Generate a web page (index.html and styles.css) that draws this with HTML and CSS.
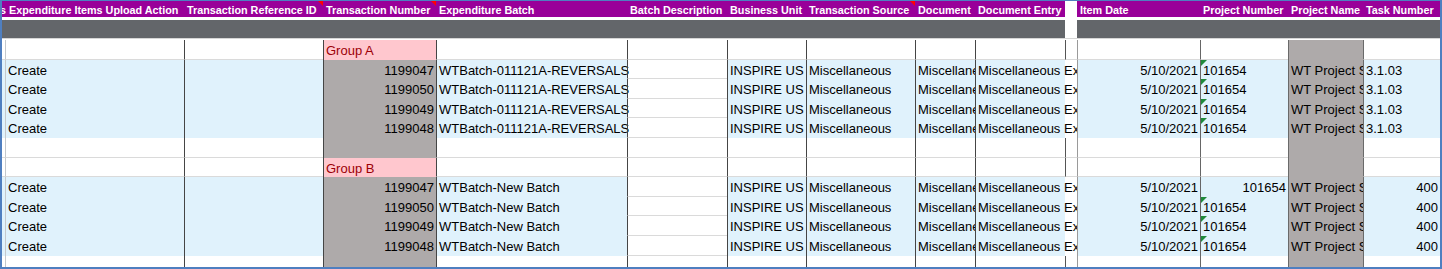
FILE: index.html
```html
<!DOCTYPE html>
<html>
<head>
<meta charset="utf-8">
<link rel="stylesheet" href="styles.css">
</head>
<body>
<div class="frame">
  <div class="row hdr">
    <div class="k0">Actions</div>
    <div class="k1">Expenditure Items Upload Action</div>
    <div class="k2 note">Transaction Reference ID</div>
    <div class="k3 note">Transaction Number</div>
    <div class="k4">Expenditure Batch</div>
    <div class="k5">Batch Description</div>
    <div class="k6">Business Unit</div>
    <div class="k7 note">Transaction Source</div>
    <div class="k8">Document</div>
    <div class="k9">Document Entry</div>
    <div class="k10"></div>
    <div class="k11">Item Date</div>
    <div class="k12">Project Number</div>
    <div class="k13">Project Name</div>
    <div class="k14">Task Number</div>
  </div>
  <div class="gap"></div>
  <div class="row band">
    <div class="k0"></div><div class="k1"></div><div class="k2"></div><div class="k3"></div><div class="k4"></div><div class="k5"></div><div class="k6"></div><div class="k7"></div><div class="k8"></div><div class="k9"></div><div class="k10"></div><div class="k11"></div><div class="k12"></div><div class="k13"></div><div class="k14"></div>
  </div>
  <div class="sep"></div>

  <div class="row body grp">
    <div class="k0"></div><div class="k1"></div><div class="k2"></div><div class="k3">Group A</div><div class="k4"></div><div class="k5"></div><div class="k6"></div><div class="k7"></div><div class="k8"></div><div class="k9"></div><div class="k10"></div><div class="k11"></div><div class="k12"></div><div class="k13"></div><div class="k14"></div>
  </div>
  <div class="row body data">
    <div class="k0"></div><div class="k1">Create</div><div class="k2"></div><div class="k3 num">1199047</div><div class="k4 ov">WTBatch-011121A-REVERSALS</div><div class="k5"></div><div class="k6">INSPIRE US Entity</div><div class="k7">Miscellaneous</div><div class="k8">Miscellaneous</div><div class="k9 ov">Miscellaneous Expenditure</div><div class="k10"></div><div class="k11 num">5/10/2021</div><div class="k12 tri">101654</div><div class="k13">WT Project Summary</div><div class="k14">3.1.03</div>
  </div>
  <div class="row body data">
    <div class="k0"></div><div class="k1">Create</div><div class="k2"></div><div class="k3 num">1199050</div><div class="k4 ov">WTBatch-011121A-REVERSALS</div><div class="k5"></div><div class="k6">INSPIRE US Entity</div><div class="k7">Miscellaneous</div><div class="k8">Miscellaneous</div><div class="k9 ov">Miscellaneous Expenditure</div><div class="k10"></div><div class="k11 num">5/10/2021</div><div class="k12 tri">101654</div><div class="k13">WT Project Summary</div><div class="k14">3.1.03</div>
  </div>
  <div class="row body data">
    <div class="k0"></div><div class="k1">Create</div><div class="k2"></div><div class="k3 num">1199049</div><div class="k4 ov">WTBatch-011121A-REVERSALS</div><div class="k5"></div><div class="k6">INSPIRE US Entity</div><div class="k7">Miscellaneous</div><div class="k8">Miscellaneous</div><div class="k9 ov">Miscellaneous Expenditure</div><div class="k10"></div><div class="k11 num">5/10/2021</div><div class="k12 tri">101654</div><div class="k13">WT Project Summary</div><div class="k14">3.1.03</div>
  </div>
  <div class="row body data">
    <div class="k0"></div><div class="k1">Create</div><div class="k2"></div><div class="k3 num">1199048</div><div class="k4 ov">WTBatch-011121A-REVERSALS</div><div class="k5"></div><div class="k6">INSPIRE US Entity</div><div class="k7">Miscellaneous</div><div class="k8">Miscellaneous</div><div class="k9 ov">Miscellaneous Expenditure</div><div class="k10"></div><div class="k11 num">5/10/2021</div><div class="k12 tri">101654</div><div class="k13">WT Project Summary</div><div class="k14">3.1.03</div>
  </div>
  <div class="row body blank">
    <div class="k0"></div><div class="k1"></div><div class="k2"></div><div class="k3"></div><div class="k4"></div><div class="k5"></div><div class="k6"></div><div class="k7"></div><div class="k8"></div><div class="k9"></div><div class="k10"></div><div class="k11"></div><div class="k12"></div><div class="k13"></div><div class="k14"></div>
  </div>

  <div class="row body grp">
    <div class="k0"></div><div class="k1"></div><div class="k2"></div><div class="k3">Group B</div><div class="k4"></div><div class="k5"></div><div class="k6"></div><div class="k7"></div><div class="k8"></div><div class="k9"></div><div class="k10"></div><div class="k11"></div><div class="k12"></div><div class="k13"></div><div class="k14"></div>
  </div>
  <div class="row body data">
    <div class="k0"></div><div class="k1">Create</div><div class="k2"></div><div class="k3 num">1199047</div><div class="k4 ov">WTBatch-New Batch</div><div class="k5"></div><div class="k6">INSPIRE US Entity</div><div class="k7">Miscellaneous</div><div class="k8">Miscellaneous</div><div class="k9 ov">Miscellaneous Expenditure</div><div class="k10"></div><div class="k11 num">5/10/2021</div><div class="k12 num">101654</div><div class="k13">WT Project Summary</div><div class="k14 num">400</div>
  </div>
  <div class="row body data">
    <div class="k0"></div><div class="k1">Create</div><div class="k2"></div><div class="k3 num">1199050</div><div class="k4 ov">WTBatch-New Batch</div><div class="k5"></div><div class="k6">INSPIRE US Entity</div><div class="k7">Miscellaneous</div><div class="k8">Miscellaneous</div><div class="k9 ov">Miscellaneous Expenditure</div><div class="k10"></div><div class="k11 num">5/10/2021</div><div class="k12 tri">101654</div><div class="k13">WT Project Summary</div><div class="k14 num">400</div>
  </div>
  <div class="row body data">
    <div class="k0"></div><div class="k1">Create</div><div class="k2"></div><div class="k3 num">1199049</div><div class="k4 ov">WTBatch-New Batch</div><div class="k5"></div><div class="k6">INSPIRE US Entity</div><div class="k7">Miscellaneous</div><div class="k8">Miscellaneous</div><div class="k9 ov">Miscellaneous Expenditure</div><div class="k10"></div><div class="k11 num">5/10/2021</div><div class="k12 tri">101654</div><div class="k13">WT Project Summary</div><div class="k14 num">400</div>
  </div>
  <div class="row body data">
    <div class="k0"></div><div class="k1">Create</div><div class="k2"></div><div class="k3 num">1199048</div><div class="k4 ov">WTBatch-New Batch</div><div class="k5"></div><div class="k6">INSPIRE US Entity</div><div class="k7">Miscellaneous</div><div class="k8">Miscellaneous</div><div class="k9 ov">Miscellaneous Expenditure</div><div class="k10"></div><div class="k11 num">5/10/2021</div><div class="k12 tri">101654</div><div class="k13">WT Project Summary</div><div class="k14 num">400</div>
  </div>
  <div class="row body blank last">
    <div class="k0"></div><div class="k1"></div><div class="k2"></div><div class="k3"></div><div class="k4"></div><div class="k5"></div><div class="k6"></div><div class="k7"></div><div class="k8"></div><div class="k9"></div><div class="k10"></div><div class="k11"></div><div class="k12"></div><div class="k13"></div><div class="k14"></div>
  </div>
</div>
</body>
</html>
```

FILE: styles.css
```css
html, body {
  margin: 0;
  padding: 0;
  background: #ffffff;
}

.frame {
  width: 1442px;
  height: 269px;
  box-sizing: border-box;
  border: 2px solid #4f7fc0;
  border-top-width: 1px;
  overflow: hidden;
  background: #ffffff;
}

.row {
  display: grid;
  grid-template-columns: 4px 178px 139px 113px 191px 100px 79px 109px 60px 90px 12px 123px 88px 75px 77px;
}

/* header */
.hdr {
  height: 16px;
  background: #990099;
  color: #ffffff;
  font: bold 10.8px/16px "Liberation Sans", Arial, sans-serif;
}
.hdr > div {
  padding: 1px 0 0 3px;
  white-space: nowrap;
  overflow: hidden;
  position: relative;
}
.hdr .k0 {
  padding: 1px 0 0 0;
  direction: rtl;
  text-align: right;
}
.hdr .k10 {
  background: #ffffff;
}
.note::after {
  content: "";
  position: absolute;
  right: 0;
  top: 0;
  border-style: solid;
  border-width: 5px 0 0 5px;
  border-color: #ff0000 transparent transparent transparent;
}

.gap {
  height: 3px;
  background: #ffffff;
}

.band {
  height: 18px;
  background: #63666a;
}
.band .k10 {
  background: #ffffff;
}

.sep {
  height: 2px;
  background: #ffffff;
  box-sizing: border-box;
  border-top: 1px solid #d6d6d6;
}

/* body rows */
.body {
  height: 19.6px;
  background: #ffffff;
  font: 13px/15px "Liberation Sans", Arial, sans-serif;
  color: #000000;
}
.body.last {
  height: 14px;
}
.body > div {
  box-sizing: border-box;
  border-left: 1px solid #454545;
  padding: 3px 3px 0 2px;
  white-space: nowrap;
  overflow: hidden;
  position: relative;
}
.body .k0 {
  border-left: none;
  border-right: 1px solid #c4c8cc;
  padding: 0;
}
.body .k1 {
  border-left: none;
}
.body .k10 {
  border-left-color: transparent;
}
.body .k11 {
  border-left-color: #9a9a9a;
}
.body .k12 {
  border-left-color: #666666;
}
.body .k13,
.body .k14 {
  border-left-color: #6a6a6a;
}

.grp > div,
.blank > div {
  border-bottom: 1px solid #dadada;
}
.grp .k10,
.blank .k10 {
  border-left-color: #555555;
}

.data > div {
  background: #e0f2fc;
}
.data .k5 {
  background: transparent;
  border-bottom: 1px solid #dadada;
}
.data .k10 {
  background: transparent;
}

.body .k3,
.body .k13 {
  background: #aeaaaa;
  border-bottom: none;
}
.grp .k3 {
  background: #ffc7ce;
  color: #9c0006;
}

.num {
  text-align: right;
}
.body .num {
  padding-right: 2px;
}
.body .ov {
  overflow: visible;
}

.tri::before {
  content: "";
  position: absolute;
  left: 0;
  top: 0;
  border-style: solid;
  border-width: 6px 6px 0 0;
  border-color: #1f8a3c transparent transparent transparent;
}
```
